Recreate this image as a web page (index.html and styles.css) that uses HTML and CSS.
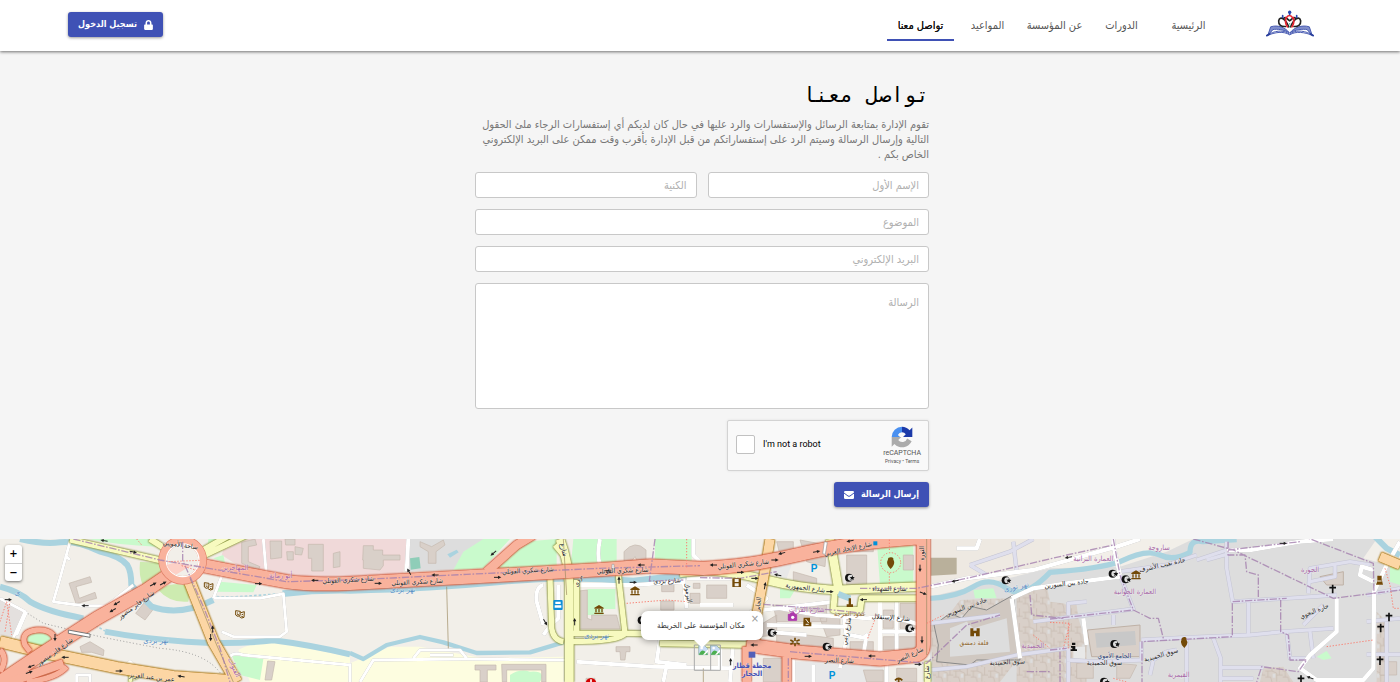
FILE: index.html
```html
<!DOCTYPE html>
<html lang="ar" dir="rtl">
<head>
<meta charset="utf-8">
<meta name="viewport" content="width=device-width, initial-scale=1">
<title>تواصل معنا</title>
<link rel="stylesheet" href="styles.css">
</head>
<body>
<header class="topbar">
  <a class="logo" href="#" aria-label="المؤسسة">
    <svg viewBox="0 0 144 80" width="48" height="27">
      <g fill="none" stroke-linecap="round" stroke-linejoin="round">
        <path d="M6 74L14 50C36 43 58 52 70 68C54 58 34 56 22 58ZM138 74L130 50C108 43 84 52 72 68C88 58 110 56 122 58Z" fill="#7f8dcb" stroke="#4a5db3" stroke-width="3"/>
        <path d="M3 76C28 66 52 62 71 74C90 62 116 66 141 76M12 70C36 60 54 60 71 72C88 60 108 60 132 70" stroke="#4a5db3" stroke-width="3"/>
        <path d="M3 76L10 72M141 76L134 72" stroke="#2a3f9c" stroke-width="6"/>
        <path d="M68 50C60 28 42 14 38 32C37 44 46 50 58 49M74 50C82 28 100 14 104 32C105 44 96 50 84 49M54 24C60 18 66 30 71 32C76 30 82 18 88 24" stroke="#222" stroke-width="5"/>
        <path d="M60 24Q70 8 81 24M60 22Q56 38 64 50M82 22Q86 38 78 50" stroke="#e7232f" stroke-width="5"/>
        <path d="M71 6V13M50 16V22M92 16V22" stroke="#2a48b0" stroke-width="5"/>
        <circle cx="71" cy="6" r="5" fill="#2a48b0"/>
        <path d="M71 40V54" stroke="#32b08c" stroke-width="3" stroke-dasharray="2 6"/>
      </g>
    </svg>
  </a>
  <nav class="tabs">
    <a href="#">الرئيسية</a>
    <a href="#">الدورات</a>
    <a href="#">عن المؤسسة</a>
    <a href="#">المواعيد</a>
    <a href="#" class="active" aria-current="page">تواصل معنا</a>
  </nav>
  <button class="btn login" type="button">
    <svg viewBox="0 0 448 512" width="9" height="10" fill="currentColor"><path d="M400 224h-24v-72C376 68 308 0 224 0S72 68 72 152v72H48c-26 0-48 22-48 48v192c0 26 22 48 48 48h352c26 0 48-22 48-48V272c0-26-22-48-48-48zm-104 0H152v-72c0-40 32-72 72-72s72 32 72 72v72z"/></svg>
    <span>تسجيل الدخول</span>
  </button>
</header>

<main class="contact">
  <h1>تواصل معنا</h1>
  <p class="intro">تقوم الإدارة بمتابعة الرسائل والإستفسارات والرد عليها في حال كان لديكم أي إستفسارات الرجاء ملئ الحقول التالية وإرسال الرسالة وسيتم الرد على إستفساراتكم من قبل الإدارة بأقرب وقت ممكن على البريد الإلكتروني الخاص بكم .</p>
  <form class="form">
    <div class="pair">
      <input type="text" placeholder="الإسم الأول" aria-label="الإسم الأول">
      <input type="text" placeholder="الكنية" aria-label="الكنية">
    </div>
    <input type="text" placeholder="الموضوع" aria-label="الموضوع">
    <input type="email" placeholder="البريد الإلكتروني" aria-label="البريد الإلكتروني" dir="rtl">
    <textarea placeholder="الرسالة" aria-label="الرسالة"></textarea>
    <div class="captcha" dir="ltr">
      <input type="checkbox" id="robot">
      <label for="robot">I'm not a robot</label>
      <div class="brand">
        <svg viewBox="0 0 64 64" width="22" height="22">
          <path d="M2 32A30 30 0 0 1 32 2V18A14 14 0 0 0 20 26L27 33Z" fill="#4a90f0"/>
          <path d="M32 2A30 30 0 0 1 54 12L62 4V32H35L43 24A14 14 0 0 0 32 18Z" fill="#1c3aa9"/>
          <path d="M2 32V60L10 52A30 30 0 0 0 60 44L47 36A15 15 0 0 1 21 41L30 32Z" fill="#ababab"/>
        </svg>
        <span class="name">reCAPTCHA</span>
        <span class="legal"><a href="#">Privacy</a> • <a href="#">Terms</a></span>
      </div>
    </div>
    <button class="btn send" type="submit">
      <span>إرسال الرسالة</span>
      <svg viewBox="0 0 30 24" width="10" height="8"><rect width="30" height="24" rx="4" fill="#fff"/><path d="M0 6L12 15Q15 17 18 15L30 6" fill="none" stroke="#3f51b5" stroke-width="3"/></svg>
    </button>
  </form>
</main>

<section class="map" dir="ltr" aria-label="الخريطة">
  <svg class="tiles" viewBox="0 12 4200 429" preserveAspectRatio="xMidYMin slice">
    <defs>
      <g id="water">
        <path stroke-width="18" d="M60 12Q130 28 180 22T300 50Q360 64 382 90Q394 110 394 150Q430 190 455 215Q540 245 640 195"/>
        <path stroke-width="18" d="M0 155Q60 170 90 200Q140 230 250 250M315 290Q420 310 560 320T820 316Q930 330 1050 358"/>
        <path stroke-width="20" d="M848 176Q950 164 1050 166Q1300 160 1500 140T1900 138L2110 114"/>
        <path stroke-width="13" d="M1050 354L1090 372L1160 330L1260 306L1330 322L1430 354L1590 352L1690 322"/>
        <path stroke-width="16" d="M2790 190Q2870 186 2920 155T3020 160T3150 112Q3300 100 3360 80Q3440 40 3480 60T3570 52Q3570 10 3610 20L3710 14"/>
        <path stroke-width="18" d="M4120 0L4160 40L4200 60M2510 176L2550 190"/>
      </g>
      <g id="alleys">
        <path d="M3360 110L3500 90L3590 60M3360 120L3400 222L3260 240L3100 260M3340 240V270M3205 240V205L3260 200M3590 75L3680 45M3620 75L3690 55M3680 20V100L3698 200L3860 190L4010 180M3745 200V300M3424 315L3550 308L3750 300L3850 290L4000 280M3925 175L3930 100L4050 80L4110 90M3930 140L4005 125V85M4100 180L4200 160M3910 270L3970 210M3930 290L3940 370M3860 290L3870 370H3920M3640 310L3662 370V441M3560 310V441M3662 398H3790M3660 430H3760M3424 320V375L3290 380L3200 375M3500 350L3460 375L3450 420M3530 345L3500 350M3205 340V441M3000 240L2790 265M2910 90L3030 50L3100 12M2910 90L2960 120M3040 20L3050 110M2790 405L2900 395L3050 360L3200 340M4100 260L4200 250M4100 358H4200M4160 260V441"/>
      </g>
      <g id="streets">
        <path stroke-width="9" d="M210 20L180 130L160 200L250 212H320L400 150M80 230L50 300M0 190L75 230L35 320M195 60L210 75M640 190L670 110M640 190H780L850 176L860 290L840 305H700L665 290M790 12L800 130M230 441V420H270V441M370 400L390 380L410 400M690 365Q700 350 730 360L1050 390M1080 441L1120 375L1400 372L1700 375M1240 370L1260 345H1380L1400 370M1050 385V441M1360 360H1290"/>
        <path stroke-width="12" d="M1225 12L1220 110M1800 12Q1790 60 1800 90M1630 150Q1605 155 1610 200L1630 270M1675 150V250Q1650 270 1630 300M1700 150H1900L2050 140M2050 130L2060 220M1980 310L1970 380L2060 390M1730 380L1960 395L2200 400M2000 390L1990 441"/>
        <path stroke-width="12" d="M2080 12V60L2100 80M2060 130L2200 130M2100 210H2200M2240 150L2300 190L2270 220V360M2300 270L2530 275M2340 220L2450 240L2600 250Q2680 240 2760 270M2250 230L2500 200M2530 230L2540 310L2520 400M2590 310L2600 300L2590 360M2640 200V350M2690 200V350M2640 290H2760M2550 300L2600 310M2200 320L2190 441M2440 390V441M2660 390V441M2380 375V441M2160 330L2160 400M2300 290L2420 300"/>
        <path stroke-width="13" d="M2790 155L2900 130L3100 105L3350 35L3420 12M3035 190L3100 160L3200 145L3360 125M3035 190L3060 370M3340 12V30L3360 120M3250 250L3260 330M3680 45H3750L3900 20L4000 12M4010 190V290L3930 360L3900 400L3950 435H4090L4120 400L4122 170L4160 90L4200 20M4120 140L4080 120L4085 95L4120 105M2870 40H2930L2940 12"/>
      </g>
      <g id="secondary">
        <path stroke-width="18" d="M210 14L490 78M450 12L510 50M740 0L610 62M690 0L610 45"/>
        <path stroke-width="26" d="M1680 12Q1705 80 1708 150V441"/>
        <path stroke-width="16" d="M1650 130L1655 280Q1660 315 1690 320M1730 135V290M1708 295H1890L2000 298M1708 320Q1860 320 1875 296L1855 120M1665 30L1690 60M2040 118L2105 112"/>
        <path stroke-width="26" d="M2105 105Q2200 110 2300 135T2500 165L2760 155M2490 12L2515 160"/>
        <path stroke-width="18" d="M2505 165L2500 225H2580L2585 190H2760M2783 380V441M1980 325L2250 330"/>
        <path stroke-width="10" d="M370 400Q400 415 390 441M430 415L400 430"/>
      </g>
      <g id="primary">
        <path stroke-width="34" d="M0 320L130 352L350 398L520 425L700 438M565 130L640 320L710 441"/>
        <path stroke-width="28" d="M2310 12L2296 100L2270 240L2265 330M4140 65L4200 90"/>
      </g>
      <g id="trunk">
        <path stroke-width="40" d="M0 441Q60 400 120 360L290 250L440 165L520 110M600 90Q700 110 860 140Q930 150 1050 145L1400 126L1800 104L1950 93L2110 100Q2260 92 2400 58T2760 8M2770 0V330Q2770 358 2740 362L2640 372L2400 352L2240 330"/>
        <path stroke-width="26" d="M30 441L190 385M1460 110L1550 30L1600 0M2240 335V441M2360 365V441"/>
        <path stroke-width="16" d="M80 441Q170 430 200 395M170 350Q175 280 110 285Q60 290 75 330L90 350M0 345Q25 370 0 410"/>
      </g>
      <g id="arrow"><path d="M-11 0H5" stroke="#222" stroke-width="3"/><path d="M11 0L1 -5V5Z" fill="#222"/></g>
      <g id="moon"><circle r="12" fill="#111"/><circle cx="5" r="9" fill="#ddd"/><path d="M10 -7L12 -2L17 -1L13 3L14 8L9 5L4 7L6 2L2 -2L8 -2Z" fill="#111"/></g>
      <g id="cross"><path d="M0 -13V13M-10 -4H10" stroke="#111" stroke-width="5"/></g>
      <g id="museum" fill="#734a08"><path d="M-14 -6L0 -14L14 -6V-3H-14ZM-14 9H14V13H-14ZM-11 -2H-7V8H-11ZM-2 -2H2V8H-2ZM7 -2H11V8H7Z"/></g>
      <g id="masks" fill="none" stroke="#734a08" stroke-width="3"><path d="M-13 -11L1 -9L0 4Q-8 9 -13 2ZM3 -5L13 -8L12 9Q5 14 -2 7M-9 -4L-6 -4M-3 -4H-2M-9 2Q-6 -1 -3 2M5 1L9 0M4 6Q7 9 9 5"/></g>
      <g id="film"><rect x="-13" y="-13" width="26" height="26" fill="#734a08"/><path d="M-6 -11H6V-2H-6ZM-6 2H6V11H-6Z" fill="#f2efe9"/></g>
      <g id="broken"><path d="M1 1H19L28 10V28H1Z" fill="#c9dcf5" stroke="#8aa" stroke-width="2"/><path d="M2 27Q10 8 22 20L28 26V28H2Z" fill="#4caf50"/><path d="M14 28L29 12V19L20 28Z" fill="#fff"/><circle cx="10" cy="8" r="4" fill="#fff"/></g>
      <pattern id="houses" width="52" height="44" patternUnits="userSpaceOnUse"><rect width="52" height="44" fill="#d9d0c9"/><path d="M0 12H20V0M20 12L34 18V44M34 24H52M0 30H16L20 44M8 12V30M42 0V24" fill="none" stroke="#c6b9af" stroke-width="2"/><path d="M22 20H30V32H22Z" fill="#ddd"/></pattern>
    </defs>

    <!-- land cover -->
    <path fill="#f2efe9" d="M0 0H4200V441H0Z"/>
    <path fill="#f0d9d9" d="M680 12H1225L1210 115L1050 130L860 125L720 95L665 60Z"/>
    <path fill="#ddd" d="M1230 12H1460L1375 105L1225 110Z"/>
    <path fill="#e4e0de" d="M0 190L75 230L45 310L0 300Z"/>
    <path fill="#ddd" d="M2790 185L3150 100L3360 95L3500 50L3580 12H4130L4090 70L4200 100V441H2790Z"/>
    <path fill="#eee9e2" d="M2790 12H3150V90L2790 150Z"/>
    <path fill="#fdfde0" d="M715 345Q760 318 840 322L1050 366V441H750ZM1050 385L1170 335H1260L1450 370L1690 365V441H1050Z"/>
    <g fill="#c9facc">
      <path d="M265 12H450L470 35Q350 30 265 12ZM625 12H740L620 60ZM640 70L670 60L675 85ZM660 140L770 150L760 172L650 170ZM75 300Q110 275 155 300L160 350L90 330ZM20 400L100 355L160 372L50 415ZM100 425L180 392L165 420ZM695 360L790 372L780 435L720 420Z"/>
      <path d="M1390 50L1450 12H1530L1450 100L1360 105ZM1570 20L1670 12V100L1470 106ZM1720 12H1850V86L1712 98ZM1965 12H2075V78L1965 84ZM1762 162H1846V222H1810V240H1762ZM2630 12H2740V160L2640 150ZM2920 165L2980 160L2990 190H2925ZM3950 365L3980 348L3995 370L3970 375ZM4170 90H4200V150L4170 140ZM2340 160L2385 165L2370 190L2340 190Z"/>
      <path d="M1530 420Q1560 400 1590 410Q1640 405 1620 441H1530Z"/>
    </g>
    <path fill="#cdebb0" d="M420 80L480 85Q480 115 500 130L430 155Q415 120 420 80ZM475 165Q520 135 570 155L565 200Q510 205 475 165Z"/>
    <path fill="#8fcdb8" d="M1230 70L1258 66L1262 100L1232 104Z"/>
    <path fill="#aad3df" d="M1342 58L1370 44L1376 52L1350 68Z"/>
    <path fill="url(#houses)" d="M2830 260L2880 195L3030 190L3055 370L3000 441H2800L2790 270ZM3050 180L3140 150L3150 200L3230 210L3235 250L3260 330V441H3050ZM3790 400L3850 395L3880 441H3780ZM4130 230L4160 260V441H4130Z"/>
    <path fill="#d0c8c1" stroke="#888" stroke-width="3" d="M2802 270L2850 235L2885 250L2915 215L2960 225L3040 180L3060 375H2930L2910 390L2810 380L2815 330Z"/>
    <path fill="#ddd" d="M2850 280L2900 260L2920 280L3020 250L3030 350L2850 365Z"/>
    <path fill="#d9d0c9" d="M3262 285L3420 270V365H3275ZM3960 125L4030 110V150H3980Z" stroke="#bfb1a6" stroke-width="3"/>
    <path fill="#c8c8c8" d="M3285 295L3405 288L3408 330L3290 338Z"/>
    <path fill="#e8e8e8" d="M2250 60L2380 75L2360 130L2280 110ZM2380 380L2560 375L2650 400V441H2390ZM3220 335H3255V378H3220Z"/>

    <!-- buildings -->
    <g fill="#d9d0c9" stroke="#c4b8ae" stroke-width="2">
      <path d="M207 145L270 125L275 142L228 155L238 190L285 172L290 190L228 206ZM435 200L462 220L435 255L407 235ZM240 335L270 320L312 345L310 362L275 352L245 352ZM725 22L765 12L770 30L745 35L745 80L780 95L775 105L725 85ZM810 18H845V68L812 72ZM855 12H885V30H857ZM860 50H880V75H862ZM885 35L910 40L905 60L885 58ZM925 28H970V108H935V70H925ZM1000 55L1020 50V95L1000 98ZM803 378L825 380L815 435H795Z"/>
      <path d="M1090 32H1120V45H1148V60H1200V75H1150V92L1140 105L1090 100V75H1088ZM1260 20L1295 35L1330 15L1335 30L1308 50V85H1285V50L1260 35ZM1872 50Q1905 12 1938 45V75H1910L1905 65L1895 78H1872ZM1736 168L1762 165V250L1775 255V240L1850 240L1860 282H1738ZM1985 148H2022V170H1985ZM1982 198H2022V225H1982ZM1848 335H1890V350H1878L1875 375H1862L1860 350H1848ZM1425 390H1488V405H1462V441H1440V405H1425ZM1505 388H1638V441H1625V405H1520V441H1507ZM1758 430H1785V441H1758Z"/>
      <path d="M2330 20H2380V60H2340ZM2400 15L2480 30L2475 95L2420 80ZM2540 60H2600V150H2540ZM2520 12H2620V50H2520ZM2320 210H2480V260H2330ZM2200 255L2280 270L2330 240V300L2230 310ZM2330 300H2420L2500 310V345L2330 340ZM2290 370H2370V441H2290ZM2550 320H2620V360H2550ZM2650 225H2680V280H2650ZM2700 205H2750V280H2700ZM2650 305H2750V345H2650ZM2590 405H2650V441H2600ZM2710 60H2740V105H2710ZM2460 250L2520 240V300L2480 305ZM2120 150H2180V190H2120ZM2070 175H2100V205H2070ZM2380 110L2450 130V150H2380Z"/>
      <path d="M2690 400H2750V441H2690ZM2080 145H2100V160H2080ZM3230 385L3280 380V430H3230ZM3350 385L3410 390L3390 430H3350ZM4140 380H4190V420H4140Z"/>
    </g>
    <path fill="#b9b09b" d="M2792 68H2870V118L2792 122Z"/>

    <!-- water and roads -->
    <use href="#water" class="line water"/>
    <path d="M650 185L700 186L850 176M250 250L315 288M60 12L180 22" class="line ford"/>
    <path d="M75 230L130 265L300 305Q400 325 480 340Q620 350 665 420" class="line dots"/>
    <use href="#alleys" class="line alley-case"/><use href="#alleys" class="line alley"/>
    <use href="#streets" class="line street"/>
    <use href="#secondary" class="line sec"/>
    <use href="#primary" class="line pri"/>
    <use href="#trunk" class="line tr"/>
    <circle cx="548" cy="76" r="60" fill="#f2efe9" stroke="#e07f66" stroke-width="26"/>
    <circle cx="548" cy="76" r="60" fill="none" stroke="#f9b29c" stroke-width="22"/>
    <circle cx="548" cy="76" r="49" fill="none" stroke="#fff" stroke-width="4"/>
    <path d="M500 90L530 80L580 92L560 100L530 118Q508 112 500 90Z" fill="#fdd0c6"/>
    <path class="line thin" stroke="#9b8a60" d="M570 130L650 330L700 441M1690 12L1700 180M1340 155L1345 340M2780 12V360M2110 400V441"/>
    <path class="line border" d="M220 12L480 75L860 140L1050 135L1400 118L1800 100L2100 92M548 20L548 76L610 215L660 340L690 441M1965 12L1948 138L2050 135M2100 128L2220 130L2330 110M2290 208L2500 225L2590 235M2580 160H2750L2900 130L3200 60L3340 30M3340 12L3360 120L3400 225L3450 250H3475L3490 310M3150 252L3400 225M3684 20V60H3735L3740 110L3775 120V190M3684 45L3900 20M3580 12L3700 45L4000 190L4200 165M3698 200L3860 190M3697 205V305L3426 320V441M3842 195V290L3865 300L3870 375H3920L3895 410L3785 395L3770 441M3900 0L4120 85L4122 180M3150 345L3200 340M3180 350V441M2370 350L2780 385L2900 270L3000 240M3090 180L3095 240L3190 250M3080 410H3150M2365 370V441"/>
    <path class="line paths" d="M0 260L20 200L35 300M15 290L30 200M410 12L425 30M505 80L600 76M545 92L590 106M1880 205L2000 195L2060 200M2060 12V100M2603 310L2630 240M2668 45V12M2668 115V150M2780 265L2830 240M3205 265V340M3150 262L3210 265L3190 340M3980 335L4120 315M4155 100L4170 150L4180 220H4200M3100 300L3150 340M3340 430L3380 441"/>
    <circle cx="2672" cy="83" r="30" class="line paths"/>
    <path d="M205 285L270 297V307L205 295Z" fill="#fff" stroke="#777" stroke-width="3"/>
    <path d="M2515 175L2550 190" class="line" stroke="#aad3df" stroke-width="16"/>
    <path fill="#fff" stroke="#999" stroke-width="2" d="M2473 20L2482 22L2476 58L2468 56ZM1836 88H1842V110H1836Z"/>

    <!-- one-way arrows -->
    <use href="#arrow" transform="translate(400 51) rotate(10)"/><use href="#arrow" transform="translate(312 17) rotate(190)"/><use href="#arrow" transform="translate(460 148) rotate(-28)"/><use href="#arrow" transform="translate(490 145) rotate(-28)"/><use href="#arrow" transform="translate(350 205) rotate(150)"/><use href="#arrow" transform="translate(338 226) rotate(150)"/><use href="#arrow" transform="translate(255 212) rotate(180)"/><use href="#arrow" transform="translate(25 194)"/><use href="#arrow" transform="translate(165 308) rotate(90)"/><use href="#arrow" transform="translate(195 367) rotate(180)"/><use href="#arrow" transform="translate(358 408)"/><use href="#arrow" transform="translate(93 394) rotate(160)"/><use href="#arrow" transform="translate(88 412) rotate(-20)"/><use href="#arrow" transform="translate(543 424) rotate(190)"/><use href="#arrow" transform="translate(638 282) rotate(-90)"/><use href="#arrow" transform="translate(632 308) rotate(90)"/><use href="#arrow" transform="translate(776 146)"/><use href="#arrow" transform="translate(944 136) rotate(180)"/>
    <use href="#arrow" transform="translate(1135 145)"/><use href="#arrow" transform="translate(1305 120) rotate(180)"/><use href="#arrow" transform="translate(1493 127)"/><use href="#arrow" transform="translate(1480 55) rotate(140)"/><use href="#arrow" transform="translate(1227 110) rotate(-120)"/><use href="#arrow" transform="translate(1824 107)"/><use href="#arrow" transform="translate(1923 90) rotate(180)"/><use href="#arrow" transform="translate(1857 135) rotate(-90)"/><use href="#arrow" transform="translate(1900 142)"/><use href="#arrow" transform="translate(1724 260) rotate(-90)"/><use href="#arrow" transform="translate(1636 262) rotate(60)"/>
    <use href="#arrow" transform="translate(2140 90) rotate(180)"/><use href="#arrow" transform="translate(2325 75)"/><use href="#arrow" transform="translate(2345 55) rotate(165)"/><use href="#arrow" transform="translate(2450 50) rotate(-10)"/><use href="#arrow" transform="translate(2550 18) rotate(170)"/><use href="#arrow" transform="translate(2222 112)"/><use href="#arrow" transform="translate(2265 130)"/><use href="#arrow" transform="translate(2333 120) rotate(190)"/><use href="#arrow" transform="translate(2490 170)"/><use href="#arrow" transform="translate(2295 152) rotate(-80)"/><use href="#arrow" transform="translate(2262 330) rotate(180)"/><use href="#arrow" transform="translate(2425 364)"/><use href="#arrow" transform="translate(2615 363) rotate(180)"/><use href="#arrow" transform="translate(2755 388)"/><use href="#arrow" transform="translate(2760 100) rotate(90)"/><use href="#arrow" transform="translate(2766 315) rotate(90)"/><use href="#arrow" transform="translate(2590 194) rotate(180)"/><use href="#arrow" transform="translate(2770 175) rotate(20)"/><use href="#arrow" transform="translate(2865 138) rotate(170)"/><use href="#arrow" transform="translate(2192 380) rotate(-90)"/><use href="#arrow" transform="translate(3205 67) rotate(170)"/><use href="#arrow" transform="translate(3850 25)"/><use href="#arrow" transform="translate(3930 428) rotate(200)"/>

    <!-- points of interest -->
    <use href="#masks" x="626" y="154"/><use href="#masks" x="720" y="238"/>
    <use href="#museum" x="1905" y="168"/><use href="#museum" x="1797" y="224"/><use href="#museum" x="3408" y="120"/>
    <use href="#film" x="2210" y="143"/>
    <use href="#moon" x="1925" y="256"/><use href="#moon" x="2547" y="128"/><use href="#moon" x="2315" y="293"/><use href="#moon" x="2480" y="335"/><use href="#moon" x="2728" y="280"/><use href="#moon" x="3017" y="136"/><use href="#moon" x="3338" y="116"/><use href="#moon" x="3377" y="133"/><use href="#moon" x="3343" y="327"/><use href="#moon" x="3312" y="440"/>
    <use href="#cross" x="3998" y="162"/><use href="#cross" x="4167" y="246"/><use href="#cross" x="4142" y="279"/><use href="#cross" x="4140" y="377"/><use href="#cross" x="3903" y="434"/>
    <rect x="1660" y="195" width="28" height="30" rx="3" fill="#0d8fd8"/><path d="M1666 200H1682V207H1666ZM1664 211H1684V218H1664Z" fill="#fff"/>
    <circle cx="1773" cy="445" r="16" fill="#d40000"/><path d="M1773 433V441" stroke="#fff" stroke-width="5"/>
    <path d="M2620 19H2632V31H2620Z" fill="#0092da"/>
    <path d="M2664 74Q2662 68 2672 67T2680 74Q2688 86 2672 102Q2656 86 2664 74ZM3545 314Q3543 308 3552 306T3559 314Q3568 325 3553 339Q3538 325 3545 314Z" fill="#734a08"/>
    <path d="M2546 190H2553V208H2559V216H2540V208H2546ZM2411 248H2430V262H2434V274H2410V262ZM2911 280H2920V287H2930V280H2939V304H2928V295H2922V304H2911ZM4132 122H4145V133L4149 149H4128L4132 138Z" fill="#734a08"/>
    <path d="M2417 252L2426 264M2417 268H2426M4132 138H4145" stroke="#f2efe9" stroke-width="3"/>
    <path d="M2385 308V318M2385 324V334M2371 315L2381 320M2389 323L2399 328M2371 328L2381 323M2389 319L2399 314M2696 430V441M2685 436Q2696 424 2707 436" stroke="#734a08" stroke-width="5" fill="none"/>
    <path d="M2365 238H2390V256H2365ZM2371 238Q2378 220 2384 238" fill="#ac39ac" stroke="#ac39ac" stroke-width="3"/><circle cx="2378" cy="247" r="5" fill="#fff"/>
    <path d="M2246 350H2266V368H2246Z" fill="#5260b8"/>
    <path d="M3216 323H3226V330H3216ZM3213 333H3226V343H3231V348H3212V343H3217V338H3213Z" fill="#111"/>
    <g class="parking"><text x="2442" y="110">P</text><text x="2496" y="433">P</text></g>

    <!-- street and place names -->
    <g class="names">
      <text transform="translate(412 215) rotate(-36)">شارع فايز منصور</text>
      <text transform="translate(168 355) rotate(-36)">شارع فايز منصور</text>
      <text transform="translate(540 36) rotate(8)">ساحة الأمويين</text>
      <text transform="translate(455 433) rotate(6)">عمر بن عبد العزيز</text>
      <text transform="translate(1045 141) rotate(-3)">شارع شكري القوتلي</text>
      <text transform="translate(1252 147) rotate(-3)">شارع شكري القوتلي</text>
      <text transform="translate(1584 113) rotate(-3)">شارع شكري القوتلي</text>
      <text transform="translate(1868 113) rotate(-2)">شارع شكري القوتلي</text>
      <text transform="translate(2230 94) rotate(-6)">شارع شكري القوتلي</text>
      <text transform="translate(2545 48) rotate(-12)">شارع الإتحاد العربي</text>
      <text transform="translate(2415 165) rotate(8)">شارع الجمهورية</text>
      <text transform="translate(2668 167)">شارع الشهداء</text>
      <text transform="translate(2672 254) rotate(4)">شارع الإستقلال</text>
      <text transform="translate(2518 383) rotate(2)">شارع النصر</text>
      <text transform="translate(2732 365) rotate(-24)">شارع النصر</text>
      <text transform="translate(2772 55) rotate(-90)">الثورة</text>
      <text transform="translate(2786 412) rotate(-90)">شارع</text>
      <text transform="translate(2280 215) rotate(-82)">الجابري</text>
      <text transform="translate(2546 290) rotate(-80)">شارع رامي</text>
      <text transform="translate(2900 222) rotate(-20)">جادة بين السورين</text>
      <text transform="translate(3022 388) rotate(-3)">سوق الحميدية</text>
      <text transform="translate(3200 152) rotate(-6)">جادة بين السورين</text>
      <text transform="translate(3488 96) rotate(-13)">جادة نقيب الأشرف</text>
      <text transform="translate(3485 366) rotate(-16)">سوق الحميدية</text>
      <text transform="translate(3313 390)">سوق الحميدية</text>
      <text transform="translate(3945 234) rotate(-22)">حارة البحوي</text>
      <text transform="translate(2002 144) rotate(-3)">شارع بردى</text>
      <text transform="translate(1740 140) rotate(-65)">بردى</text>
      <text transform="translate(1685 46) rotate(75)">شارع</text>
      <text transform="translate(2058 175) rotate(80)">اليرموك</text>
    </g>
    <g class="names river">
      <text x="468" y="323">نهر بردى</text><text x="1208" y="170">نهر بردى</text><text x="1790" y="310">نهر بردى</text>
      <text transform="translate(3050 162) rotate(-12)">نهر تورى</text><text x="52" y="181">ى</text>
    </g>
    <g class="names area">
      <text x="704" y="106">المهاجرين</text><text x="842" y="130">أبو رمانة</text><text x="3280" y="78">العمارة البرانية</text><text x="3477" y="44">ساروجة</text><text x="3405" y="178">العمارة الجوانية</text><text x="3930" y="111">الجورة</text><text x="3536" y="426">القيمرية</text><text x="3098" y="339">الحميدية</text><text x="2420" y="230">شارع الفرات</text><text transform="translate(696 400) rotate(65)">القنوات</text>
    </g>
    <g class="names brown"><text x="2550" y="242">عمود المرجة</text><text x="2922" y="331">قلعة دمشق</text></g>
    <g class="names station"><text x="2256" y="400">محطة قطار</text><text x="2256" y="424">الحجاز</text></g>
    <g class="names mosque"><text x="3343" y="370">الجامع الأموي</text></g>

    <!-- location marker -->
    <g transform="translate(2083 330)"><path d="M0 0H78V76H0ZM49 0V76" fill="none" stroke="#aaa" stroke-width="3"/><use href="#broken" x="12" y="1"/><use href="#broken" x="48" y="1"/></g>
  </svg>
  <div class="zoom">
    <button type="button" aria-label="تكبير">+</button>
    <button type="button" aria-label="تصغير">−</button>
  </div>
  <div class="popup" dir="rtl">
    <button type="button" class="close" aria-label="إغلاق">×</button>
    مكان المؤسسة على الخريطة
  </div>
</section>
</body>
</html>
```
FILE: styles.css
```css
* {
  box-sizing: border-box;
}

body {
  display: flex;
  flex-direction: column;
  min-height: 100vh;
  margin: 0;
  background: #f5f5f5;
  color: #000;
  font: 11px/15px "DejaVu Sans Condensed", "DejaVu Sans", sans-serif;
}

button,
input,
textarea {
  font: inherit;
}

a {
  color: inherit;
  text-decoration: none;
}

/* header */
.topbar {
  display: flex;
  align-items: center;
  position: relative;
  height: 51px;
  padding: 0 86px 0 68px;
  background: #fff;
  box-shadow: 0 1px 3px rgba(0, 0, 0, 0.55);
}

.logo {
  display: flex;
  margin-bottom: 4px;
}

.tabs {
  display: flex;
  flex: 1;
  padding-right: 44px;
}

.tabs a {
  width: 67px;
  padding: 8px 0 6px;
  border-bottom: 2px solid transparent;
  color: #555;
  text-align: center;
  white-space: nowrap;
}

.tabs .active {
  border-color: #3f51b5;
  color: #111;
  text-shadow: 0 0 0 #111;
}

.btn {
  display: flex;
  align-items: center;
  justify-content: center;
  height: 25px;
  padding: 0 10px;
  border: 0;
  border-radius: 3px;
  background: #3f51b5;
  box-shadow: 0 1px 3px rgba(0, 0, 0, 0.4);
  color: #fff;
  font-size: 9px;
  font-weight: bold;
  cursor: pointer;
}

.login {
  gap: 7px;
  min-width: 95px;
  margin-bottom: 2px;
}

/* contact form */
.contact {
  width: 100%;
  max-width: 458px;
  margin: 0 auto;
  padding: 27px 0 32px 4px;
}

h1 {
  margin: 0;
  font-family: "DejaVu Sans Mono", monospace;
  font-size: 21px;
  font-weight: normal;
  line-height: 35px;
}

.intro {
  margin: 4px 0 10px;
  color: #777;
}

.form {
  display: flex;
  flex-direction: column;
  align-items: flex-start;
  gap: 11px;
}

.pair {
  display: flex;
  gap: 11px;
  width: 100%;
}

.form > input,
.pair input,
.form textarea {
  width: 100%;
  min-width: 0;
  height: 26px;
  padding: 0 9px;
  border: 1px solid #c8c8c8;
  border-radius: 3px;
  background: #fff;
}

.form textarea {
  display: block;
  height: 126px;
  padding: 11px 9px;
  resize: none;
}

::placeholder {
  color: #b0b0b0;
  opacity: 1;
}

.captcha {
  display: flex;
  align-items: center;
  gap: 8px;
  width: 202px;
  height: 51px;
  padding: 0 7px 2px 8px;
  border: 1px solid #d3d3d3;
  border-radius: 2px;
  background: #f9f9f9;
  box-shadow: 0 0 3px rgba(0, 0, 0, 0.08);
  font-family: Roboto, sans-serif;
  font-size: 9px;
}

.captcha input {
  appearance: none;
  width: 19px;
  height: 19px;
  margin: 0;
  border: 1px solid #c1c1c1;
  border-radius: 2px;
  background: #fff;
}

.captcha label {
  flex: 1;
}

.brand {
  display: flex;
  flex-direction: column;
  align-items: center;
  color: #555;
}

.name {
  font-size: 7px;
  line-height: 10px;
}

.legal {
  font-size: 5px;
  line-height: 6px;
}

.send {
  gap: 7px;
  min-width: 91px;
}

/* map */
.map {
  display: flex;
  flex: 1;
  position: relative;
  min-height: 143px;
  overflow: hidden;
  background: #f2efe9;
}

.tiles {
  flex: none;
  width: 100%;
  height: 143px;
  min-height: 100%;
}

.zoom {
  position: absolute;
  top: 6px;
  left: 5px;
  border-radius: 3px;
  background: #fff;
  box-shadow: 0 1px 3px rgba(0, 0, 0, 0.55);
}

.zoom button {
  display: block;
  width: 17px;
  height: 18px;
  padding: 0;
  border: 0;
  background: none;
  font: bold 10px/18px "DejaVu Sans", sans-serif;
}

.zoom button + button {
  border-top: 1px solid #ccc;
}

.popup {
  position: absolute;
  top: 72px;
  left: calc(50% + 2px);
  width: 122px;
  padding: 8px 14px 7px 12px;
  border-radius: 7px;
  background: #fff;
  box-shadow: 0 1px 7px rgba(0, 0, 0, 0.4);
  color: #333;
  font-size: 8px;
  line-height: 14px;
  text-align: center;
  white-space: nowrap;
  transform: translateX(-50%);
}

.popup::after {
  content: "";
  position: absolute;
  top: 100%;
  left: calc(50% - 8px);
  border: 8px solid transparent;
  border-top-color: #fff;
  border-bottom: 0;
}

.close {
  position: absolute;
  top: 2px;
  right: 4px;
  padding: 0;
  border: 0;
  background: none;
  color: #999;
  font-size: 11px;
  line-height: 11px;
}

/* map drawing */
.line {
  fill: none;
  stroke-linejoin: round;
}

.water { stroke: #aad3df; }
.ford { stroke: #aad3df; stroke-width: 5; stroke-dasharray: 8 6; }
.dots { stroke: #999; stroke-width: 3; stroke-dasharray: 3 7; }
.alley-case { stroke: #c4c4d2; stroke-width: 13; }
.alley { stroke: #dfdfed; stroke-width: 10; }
.street { stroke: #fff; filter: drop-shadow(0 0 2px #aaa); }
.sec { stroke: #f7fabf; filter: drop-shadow(0 0 3px #8b9440) drop-shadow(0 0 1px #8b9440); }
.pri { stroke: #fcd6a4; filter: drop-shadow(0 0 3px #a06b00) drop-shadow(0 0 1px #a06b00); }
.tr { stroke: #f9b29c; filter: drop-shadow(0 0 3px #c84e2f) drop-shadow(0 0 1px #c84e2f); }
.thin { stroke-width: 2; }
.border { stroke: #a47fae; stroke-width: 4; stroke-dasharray: 22 5 5 5; opacity: 0.8; }
.paths { stroke: #fa8072; stroke-width: 3; stroke-dasharray: 4 5; }

.names text {
  fill: #222;
  stroke: rgba(255, 255, 255, 0.5);
  stroke-width: 2px;
  paint-order: stroke;
  font-size: 20px;
  text-anchor: middle;
}

.river text { fill: #5b8fc4; font-size: 23px; }
.area text { fill: #a565a5; font-size: 22px; }
.brown text { fill: #8b622a; }
.station text { fill: #4451b5; font-size: 22px; font-weight: bold; }
.mosque text { fill: #263a75; }

.parking text {
  fill: #0092da;
  font: bold 30px "Liberation Sans", sans-serif;
  text-anchor: middle;
}
```
